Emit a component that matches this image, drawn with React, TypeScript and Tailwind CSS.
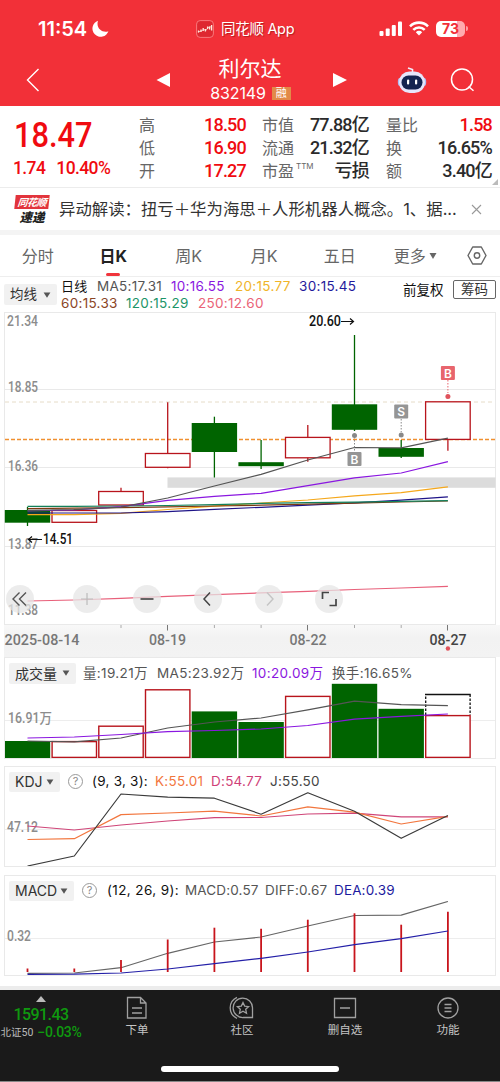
import type { ReactNode } from "react"

// x centre of each trading day
const DAYS = [27.5, 74.3, 121, 167.7, 214.4, 261.1, 307.8, 354.5, 401.2, 447.9]

const GREEN = "#006400"
const RED = "#b8141c"

// body top, body bottom, wick top, wick bottom
const CANDLES = [
  { up: false, top: 510, bottom: 522.7, high: 507, low: 526 },
  { up: true, top: 510.5, bottom: 522.3, high: 509, low: 522.3 },
  { up: true, top: 491.5, bottom: 505, high: 487.7, low: 505 },
  { up: true, top: 453.5, bottom: 467.3, high: 402.3, low: 468.3 },
  { up: false, top: 423, bottom: 452, high: 416.7, low: 477.5 },
  { up: false, top: 462.2, bottom: 466.2, high: 440, low: 469 },
  { up: true, top: 437.4, bottom: 457.8, high: 425, low: 461.8 },
  { up: false, top: 404.3, bottom: 429.8, high: 335, low: 431 },
  { up: false, top: 448, bottom: 456.8, high: 440, low: 458 },
  { up: true, top: 401.8, bottom: 439.4, high: 401.8, low: 450.8 },
]

const PRICE_LINES = [
  { color: "#e8607a", y: [601, 600, 598.4, 596.4, 594.6, 592.9, 591.3, 589.5, 588, 586.3] },
  { color: "#f5a81c", y: [514.6, 514.7, 513.4, 509.5, 506.2, 503, 500, 495.8, 492.7, 486.8] },
  { color: "#1f1488", y: [513, 513, 513, 511.6, 509.3, 507.3, 505.2, 502.8, 500.2, 496.8] },
  { color: "#7c3a12", y: [508.6, 508.2, 507.6, 506.8, 506, 505.2, 504.2, 503.2, 502, 501] },
  { color: "#12805a", y: [506.4, 506.3, 506, 505.5, 504.6, 503.4, 502.7, 502.2, 501.4, 500.6] },
  { color: "#8a17e0", y: [511, 510, 506.6, 500.3, 496.3, 493.3, 485.6, 477.8, 473, 461.7] },
  { color: "#555555", y: [510.4, 509.6, 507.2, 498, 486, 474.4, 460, 447.5, 447.8, 438.2] },
]

const VOLUMES = [741, 741.6, 726.2, 689.8, 711.4, 722, 696.4, 683.8, 708.8, 715.6]

const MACD_TOPS = [968.5, 968.5, 960, 939.5, 927.7, 928.7, 919.7, 913.3, 924.7, 911.7]

function Line({ y, color, width = 1.2 }: { y: number[]; color: string; width?: number }) {
  return (
    <polyline
      points={y.map((v, i) => `${DAYS[i]},${v}`).join(" ")}
      fill="none"
      stroke={color}
      strokeWidth={width}
      strokeLinejoin="round"
    />
  )
}

function Label({ x, y, w, children, fill = "#8c8c8c" }: { x: number; y: number; w: number; children: string; fill?: string }) {
  return (
    <text
      x={x}
      y={y}
      textLength={w}
      lengthAdjust="spacingAndGlyphs"
      fill={fill}
      className="font-['Roboto','Noto_Sans_CJK_SC',sans-serif] text-[14px] font-medium"
    >
      {children}
    </text>
  )
}

// little select box in front of every indicator
function Chip({ children, className }: { children: string; className: string }) {
  return (
    <div className={`flex shrink-0 items-center justify-between rounded-[2px] bg-[#f1f1f1] text-[#333] ${className}`}>
      <span className="whitespace-nowrap">{children}</span>
      <svg width="8" height="6" viewBox="0 0 8 6">
        <path d="M0.6 0.4h6.8L4 5.8z" fill="#555" />
      </svg>
    </div>
  )
}

function Help() {
  return (
    <span className="flex h-[15px] w-[15px] shrink-0 items-center justify-center rounded-full border border-[#999] text-[11px] leading-none tracking-normal text-[#888]">
      ?
    </span>
  )
}

function StatusBar() {
  return (
    <div className="flex h-[50px] items-center pt-[7px] pl-[38px]">
      <span className="w-[54px] text-[20px] font-semibold">11:54</span>
      <svg width="17" height="17" viewBox="0 0 17 17">
        <path d="M6 0.8A8.200 8.200 0 1 0 16.400 11.200C11 13.500 3.500 8.500 6 0.800z" fill="#fff" />
      </svg>
      <div className="ml-[87px] flex items-center gap-[7px]">
        <svg width="18" height="18" viewBox="0 0 18 18">
          <rect x="0.6" y="0.6" width="16.8" height="16.8" rx="3.5" fill="#de2830" stroke="#f8797c" />
          <path d="M2.500 12.500v-2M5 12V9.500M7.200 11V8M9.400 11.500V9M11.600 9V6.500M13.600 9.500V6.500M15.600 10.500V5" fill="none" stroke="#ffe9dd" strokeWidth="1.300" />
          <path d="M2 12l3-1 3-1.500 2 1 2-3 4-1" fill="none" stroke="#ffe9dd" strokeWidth="0.700" />
        </svg>
        <span className="w-[75px] text-[14.500px] whitespace-nowrap tracking-[-0.300px] [text-shadow:1px_1px_1px_rgba(110,0,0,0.45)]">同花顺 App</span>
      </div>
      <svg className="ml-[83px]" width="24" height="17" viewBox="0 0 24 17" fill="#fff">
        <rect x="0.5" y="11" width="4" height="5" rx="1" />
        <rect x="6.700" y="8.500" width="4" height="7.500" rx="1" />
        <rect x="12.800" y="5" width="4" height="11" rx="1" />
        <rect x="19" y="1.500" width="4" height="14.500" rx="1" />
      </svg>
      <svg className="ml-[6px]" width="20" height="15" viewBox="0 0 20 15">
        <g fill="none" stroke="#fff" strokeWidth="2.600">
          <path d="M1 5.300a12.800 12.800 0 0 1 18 0" />
          <path d="M4.300 8.900a8.100 8.100 0 0 1 11.400 0" />
        </g>
        <path d="M10 14.400l-3.200-3.200a4.500 4.500 0 0 1 6.400 0z" fill="#fff" />
      </svg>
      <div className="ml-[7px] flex h-4 w-[29px] items-center justify-center rounded-[5px] bg-[linear-gradient(90deg,#fff_73%,#ffabae_73%)] text-[14px] font-bold text-[#f23038]">
        73
      </div>
      <div className="ml-px h-[5px] w-[2px] rounded-r bg-[#ff9da1]" />
    </div>
  )
}

function TitleBar() {
  return (
    <div className="flex h-14 items-center pt-[3px] pl-[26px]">
      <svg width="14" height="24" viewBox="0 0 14 24">
        <path d="M12.500 1L1.500 12l11 11" fill="none" stroke="#fff" strokeWidth="1.400" />
      </svg>
      <svg className="ml-[116px]" width="15" height="14" viewBox="0 0 15 14">
        <path d="M14 0v14L0.500 7z" fill="#fff" />
      </svg>
      <div className="ml-[13px] flex w-[132px] flex-col items-center pt-[2px]">
        <span className="text-[21px] leading-[26px]">利尔达</span>
        <div className="mt-px flex items-center gap-[6px] pb-[2px] pl-px">
          <span className="text-[16px] leading-5 tracking-[-0.100px]">832149</span>
          <span className="flex h-[13px] w-[19px] items-center justify-center bg-[#e28a48] text-[11px] leading-none">融</span>
        </div>
      </div>
      <svg className="ml-[17px]" width="15" height="14" viewBox="0 0 15 14">
        <path d="M0 0v14L14 7z" fill="#fff" />
      </svg>
      <svg className="ml-[49px]" width="30" height="28" viewBox="0 0 30 28">
        <path d="M15.500 6.500V3.500L11 2" fill="none" stroke="#f2eefc" strokeWidth="1.600" />
        <ellipse cx="2.800" cy="16" rx="2" ry="4" fill="#aebdf5" />
        <ellipse cx="27.200" cy="16" rx="2" ry="4" fill="#aebdf5" />
        <rect x="2" y="5.500" width="26" height="21.500" rx="10.500" fill="#e6e5fb" />
        <rect x="4.500" y="9.500" width="21" height="14" rx="7" fill="#142350" />
        <rect x="10" y="13.500" width="2.200" height="5" rx="1" fill="#fff" />
        <rect x="18" y="13.500" width="2.200" height="5" rx="1" fill="#fff" />
      </svg>
      <svg className="ml-[23px]" width="25" height="24" viewBox="0 0 25 24">
        <circle cx="12" cy="11.500" r="10.500" fill="none" stroke="#fff" strokeWidth="1.500" />
        <path d="M18.500 18.500l5 4.300" stroke="#fff" strokeWidth="1.500" />
      </svg>
    </div>
  )
}

function Stat({ label, value, red }: { label: ReactNode; value: string; red?: boolean }) {
  return (
    <div className="flex h-[23px] items-center justify-between whitespace-nowrap">
      <span className="text-[16px] text-[#666]">{label}</span>
      <span className={`font-['Roboto','Noto_Sans_CJK_SC',sans-serif] text-[18px] font-medium tracking-[-0.800px] ${red ? "text-[#f00b10]" : "text-[#2b2b2b]"}`}>
        {value}
      </span>
    </div>
  )
}

function Quote() {
  return (
    <div className="relative flex h-[82px] border-b border-[#ececec] pt-[7px]">
      <div className="w-[139px] pl-[13px] font-['Roboto',sans-serif] text-[#f00b10]">
        <div className="h-[43px] origin-left scale-x-[0.880] pl-px text-[35px] leading-[46px] font-medium">18.47</div>
        <div className="flex gap-[11px] text-[17.500px] leading-[25px] font-medium tracking-[-0.600px]">
          <span>1.74</span>
          <span>10.40%</span>
        </div>
      </div>
      <div className="w-[107px]">
        <Stat label="高" value="18.50" red />
        <Stat label="低" value="16.90" red />
        <Stat label="开" value="17.27" red />
      </div>
      <div className="ml-4 w-[107px]">
        <Stat label="市值" value="77.88亿" />
        <Stat label="流通" value="21.32亿" />
        <Stat label={<>市盈<sup className="top-[-8px] ml-[2px] text-[8px]">TTM</sup></>} value="亏损" />
      </div>
      <div className="ml-[17px] w-[106px]">
        <Stat label="量比" value="1.58" red />
        <Stat label="换" value="16.65%" />
        <Stat label="额" value="3.40亿" />
      </div>
      <svg className="absolute right-[2px] bottom-[2px]" width="6" height="6">
        <path d="M6 0v6H0z" fill="#bbb" />
      </svg>
    </div>
  )
}

function News() {
  return (
    <div className="flex h-[42px] items-center pl-[14px]">
      <div className="flex w-[36px] flex-col items-center font-bold italic">
        <span className="flex h-[14px] w-[34px] -skew-x-6 items-center justify-center bg-[#e2343c] text-[10px] leading-none tracking-[-0.500px] text-white">同花顺</span>
        <span className="mt-[2px] text-[12.500px] leading-[13px] font-black text-[#222]">速递</span>
      </div>
      <span className="ml-[9px] w-[402px] text-[16.400px] whitespace-nowrap text-[#333]">
        异动解读：扭亏＋华为海思＋人形机器人概念。1、据...
      </span>
      <svg className="ml-[10px]" width="11" height="11" viewBox="0 0 11 11">
        <path d="M1 1l9 9M10 1l-9 9" stroke="#999" strokeWidth="1.100" />
      </svg>
    </div>
  )
}

function Tabs() {
  return (
    <div className="flex h-[42px] border-b border-[#eee] text-[16px] text-[#666]">
      {["分时", "日K", "周K", "月K", "五日"].map((tab) => (
        <div key={tab} className="flex w-[75.500px] flex-col items-center">
          <span className={`h-[37px] leading-[42px] ${tab === "日K" ? "font-bold text-[#222]" : ""}`}>{tab}</span>
          {tab === "日K" && <span className="mt-px h-[3.500px] w-[14px] rounded-sm bg-[#f0343c]" />}
        </div>
      ))}
      <div className="flex w-[75.500px] items-center justify-center gap-[3px]">
        更多
        <svg width="8" height="6" viewBox="0 0 8 6">
          <path d="M0.500 0h7L4 6z" fill="#666" />
        </svg>
      </div>
      <div className="flex flex-1 items-center justify-center">
        <svg width="20" height="19" viewBox="0 0 20 19" fill="none" stroke="#666" strokeWidth="1.400">
          <path d="M5.700 1h8.600L19 9.500 14.300 18H5.700L1 9.500z" strokeLinejoin="round" />
          <circle cx="10" cy="9.500" r="2.700" />
        </svg>
      </div>
    </div>
  )
}

function Averages() {
  return (
    <div className="flex h-[35px] items-start pl-1 text-[13.500px]">
      <Chip className="mt-[7px] h-[21px] w-[53px] px-[6px] text-[13.500px]">均线</Chip>
      <div className="ml-[4px] w-[342px] pt-px leading-[17px] tracking-[0.300px] whitespace-nowrap">
        <div className="flex">
          <span className="w-[36px] text-[13px] text-[#111]">日线</span>
          <span className="w-[74px] text-[#555]">MA5:17.31</span>
          <span className="w-[64px] text-[#8a17e0]">10:16.55</span>
          <span className="w-[64px] text-[#f0b429]">20:15.77</span>
          <span className="text-[#1f1a9c]">30:15.45</span>
        </div>
        <div className="flex">
          <span className="w-[65px] text-[#8a4526]">60:15.33</span>
          <span className="w-[72px] text-[#1c9468]">120:15.29</span>
          <span className="text-[#ea6478]">250:12.60</span>
        </div>
      </div>
      <span className="mt-[3px] w-[50px] text-[13.500px] leading-[20px] text-[#111]">前复权</span>
      <span className="mt-[3px] flex h-[19px] w-[43px] items-center justify-center rounded-[2px] border border-[#666] text-[13.500px] text-[#333]">
        筹码
      </span>
    </div>
  )
}

// trade marks
function Mark({ x, y, letter, fill }: { x: number; y: number; letter: string; fill: string }) {
  return (
    <g>
      <rect x={x - 7} y={y - 7} width="14" height="14" rx="1" fill={fill} />
      <text x={x} y={y + 4.500} textAnchor="middle" fill="#fff" className="font-['Inter',sans-serif] text-[12px] font-semibold">
        {letter}
      </text>
    </g>
  )
}

function PriceChart() {
  return (
    <svg className="block" width="500" height="345" viewBox="0 312 500 345">
      <defs>
        <linearGradient id="axis" x1="0" y1="0" x2="0" y2="1">
          <stop offset="0" stopColor="#f8f8f8" />
          <stop offset="0.4" stopColor="#f2f2f2" />
          <stop offset="1" stopColor="#f3f3f3" />
        </linearGradient>
      </defs>
      <rect x="4" y="625" width="496" height="32" fill="url(#axis)" />
      <g stroke="#e9e9e9" fill="none">
        <rect x="4.500" y="312.500" width="491" height="312" />
        <path d="M5 389.500h490M5 467.500h490M5 546.500h490" />
      </g>
      <rect x="167.500" y="477.400" width="328" height="10.400" fill="#dcdcdc" />
      <path d="M5 402h490" stroke="#e6dcc8" strokeDasharray="4 3" />
      <path d="M5 439.500h490" stroke="#f09030" strokeWidth="1.300" strokeDasharray="4 2" />

      <Label x={7} y={326} w={31}>21.34</Label>
      <Label x={8} y={392} w={30}>18.85</Label>
      <Label x={8} y={471} w={30}>16.36</Label>
      <Label x={8} y={549} w={30}>13.87</Label>
      <Label x={8} y={615} w={30}>11.38</Label>

      {CANDLES.map((c, i) => (
        <g key={i} stroke={c.up ? RED : GREEN} strokeWidth="1.300" fill={c.up ? "#fff" : GREEN}>
          <path d={`M${DAYS[i]} ${c.high}V${c.low}`} />
          {c.up ? (
            <rect x={DAYS[i] - 22.300} y={c.top} width="44.600" height={c.bottom - c.top} />
          ) : (
            <rect x={DAYS[i] - 22.700} y={c.top} width="45.400" height={c.bottom - c.top} stroke="none" />
          )}
        </g>
      ))}
      {PRICE_LINES.map((l) => (
        <Line key={l.color} y={l.y} color={l.color} />
      ))}

      <Label x={309} y={326} w={32} fill="#111">20.60</Label>
      <path d="M341 321.500h12.500M350 318.500l3.500 3-3.500 3" fill="none" stroke="#111" strokeWidth="1.200" />
      <Label x={43} y={544} w={30} fill="#111">14.51</Label>
      <path d="M42 539.500H28.500M32 536.500l-3.500 3 3.500 3" fill="none" stroke="#111" strokeWidth="1.200" />

      <path d="M354.500 437v14M401.200 419v13" stroke="#888" strokeDasharray="1.500 1.500" />
      <circle cx="354.500" cy="435.500" r="2.500" fill="#888" />
      <circle cx="401.200" cy="435" r="2.500" fill="#888" />
      <path d="M447.900 380v13" stroke="#e8656d" strokeDasharray="1.500 1.500" />
      <circle cx="447.900" cy="396.500" r="2.500" fill="#e0525c" />
      <Mark x={354.500} y={459} letter="B" fill="#959595" />
      <Mark x={401.200} y={411.500} letter="S" fill="#959595" />
      <Mark x={447.900} y={373} letter="B" fill="#e8656d" />

      <path d="M121 625v3M214.400 625v3M261.100 625v3M354.500 625v3M401.200 625v3" stroke="#aaa" />
      <path d="M167.500 625v5.500M307.500 625v5.500M447.500 625v5.500" stroke="#777" />
      <Label x={4.500} y={645} w={75} fill="#777">2025-08-14</Label>
      <Label x={149} y={645} w={37} fill="#777">08-19</Label>
      <Label x={289.500} y={645} w={37} fill="#777">08-22</Label>
      <Label x={429.500} y={645} w={37} fill="#444">08-27</Label>
      <circle cx="447.900" cy="648.500" r="2.200" fill="#e0525c" />
    </svg>
  )
}

function ChartButtons() {
  const icons = [
    { d: "M10 -6.500L3.500 0 10 6.500M3.500 -6.500L-3 0l6.500 6.500", color: "#555", width: 1.400, x: -4 },
    { d: "M-6 0h12M0 -6v12", color: "#bbb", width: 1.200, x: 0 },
    { d: "M-6.500 0h13", color: "#555", width: 1.800, x: 0 },
    { d: "M3 -6.500L-3 0l6 6.500", color: "#444", width: 1.500, x: -1 },
    { d: "M-3 -6.500L3 0l-6 6.500", color: "#c4c4c4", width: 1.400, x: 1 },
    { d: "M-6.500 0v-6.500H0M7 0v6.500H0.500", color: "#444", width: 1.700, x: 0 },
  ]
  return (
    <div className="absolute top-[273px] left-[6px] flex gap-[32.700px]">
      {icons.map((icon, i) => (
        <span key={i} className={`h-7 w-7 rounded-full bg-[#e6e6e6]/75 ${i === 0 ? "mr-[6px]" : ""}`}>
          <svg width="28" height="28" viewBox="-14 -14 28 28">
            <path d={icon.d} transform={`translate(${icon.x})`} fill="none" stroke={icon.color} strokeWidth={icon.width} />
          </svg>
        </span>
      ))}
    </div>
  )
}

function Volume() {
  return (
    <section className="ml-1 h-[102px] w-[492px] border border-[#e9e9e9] bg-white">
      <div className="flex h-[25px] items-center pt-[5px] pl-1 text-[13.500px] tracking-[0.350px] whitespace-nowrap text-[#555]">
        <Chip className="h-[21px] w-[67px] px-[6px] text-[14px] tracking-normal">成交量</Chip>
        <span className="ml-[7px] w-[74px]">量:19.21万</span>
        <span className="w-[95px]">MA5:23.92万</span>
        <span className="w-[80px] text-[#8a17e0]">10:20.09万</span>
        <span>换手:16.65%</span>
      </div>
      <svg className="block" width="490" height="75" viewBox="5 683 490 75">
        <path d="M5 720.500h490" stroke="#ededed" />
        <Label x={8} y={723} w={44}>16.91万</Label>
        {VOLUMES.map((top, i) =>
          CANDLES[i].up ? (
            <rect key={i} x={DAYS[i] - 22.200} y={top} width="44.400" height={757.400 - top} fill="#fff" stroke={RED} strokeWidth="1.400" />
          ) : (
            <rect key={i} x={DAYS[i] - 22.700} y={top} width="45.400" height={758 - top} fill={GREEN} />
          )
        )}
        <path d="M425.700 715V694.500M470.100 694.500V715" stroke="#111" strokeWidth="1.300" strokeDasharray="2.500 1.500" />
        <path d="M425 694.500h45.700" stroke="#111" strokeWidth="1.300" />
        <Line color="#555555" y={[741, 741.800, 738, 728, 722, 718, 709.800, 701.200, 704.700, 705.700]} />
        <Line color="#8a17e0" y={[738, 737, 734.500, 731.700, 730.500, 729, 725.500, 719.200, 716.300, 714]} />
      </svg>
    </section>
  )
}

function Kdj() {
  return (
    <section className="mt-[7px] ml-1 h-[101px] w-[492px] border border-[#e9e9e9] bg-white">
      <div className="flex h-[25px] items-center pt-[4px] pl-1 text-[13.500px] tracking-[0.250px] whitespace-nowrap">
        <Chip className="h-5 w-[51px] px-[6px] text-[14px] tracking-normal">KDJ</Chip>
        <span className="ml-2 w-[24px]"><Help /></span>
        <span className="w-[63px] text-[#111]">(9, 3, 3):</span>
        <span className="w-[56px] text-[#f2763e]">K:55.01</span>
        <span className="w-[59px] text-[#cf3f78]">D:54.77</span>
        <span className="text-[#444]">J:55.50</span>
      </div>
      <svg className="block" width="490" height="74" viewBox="5 792 490 74">
        <path d="M5 829.500h490" stroke="#ededed" />
        <Label x={7} y={832} w={31}>47.12</Label>
        <Line color="#cf4578" y={[826, 830, 825, 821, 817.600, 817.500, 814, 813.200, 816.800, 816.800]} />
        <Line color="#f2763e" y={[839.500, 838.700, 814.600, 813, 811.200, 816, 806.800, 812.200, 824, 816.400]} />
        <Line color="#3a3a3a" y={[866, 856, 794, 797.200, 798.200, 814.200, 792.800, 811.200, 838.300, 815.500]} />
      </svg>
    </section>
  )
}

function Macd() {
  return (
    <section className="mt-2 ml-1 h-[101px] w-[492px] border border-[#e9e9e9] bg-white">
      <div className="flex h-[25px] items-center pt-[4px] pl-1 text-[13.500px] tracking-[0.150px] whitespace-nowrap text-[#555]">
        <Chip className="h-5 w-[65px] px-[6px] text-[14px] tracking-normal">MACD</Chip>
        <span className="ml-2 w-[25px]"><Help /></span>
        <span className="w-[78px] tracking-[0.400px] text-[#111]">(12, 26, 9):</span>
        <span className="w-[80px]">MACD:0.57</span>
        <span className="w-[69px]">DIFF:0.67</span>
        <span className="text-[#1c1a9e]">DEA:0.39</span>
      </div>
      <svg className="block" width="490" height="74" viewBox="5 901 490 74">
        <path d="M5 938.500h490" stroke="#ededed" />
        <Label x={7} y={941} w={24}>0.32</Label>
        <Line color="#666666" y={[973.300, 973, 967.700, 953.300, 942, 937, 926, 915.500, 915.200, 901.500]} />
        {MACD_TOPS.map((top, i) => (
          <path key={i} d={`M${DAYS[i]} ${top}V972`} stroke="#c8141c" strokeWidth="1.800" />
        ))}
        <Line color="#2420a8" y={[974.300, 974.200, 973, 969, 963.700, 958.300, 952, 944.700, 938.600, 931]} />
      </svg>
    </section>
  )
}

function NavItem({ label, children, className }: { label: string; children: ReactNode; className: string }) {
  return (
    <div className={`flex flex-col items-center pt-[6px] ${className}`}>
      <svg width="26" height="24" viewBox="0 0 26 24" fill="none" stroke="#a0a0a0" strokeWidth="1.300">
        {children}
      </svg>
      <span className="text-[11.500px] leading-[21px] text-[#c4c4c4]">{label}</span>
    </div>
  )
}

function BottomNav() {
  return (
    <nav className="flex h-[92px] flex-col items-center bg-[#1a1a1a]">
      <div className="flex h-[76px] w-full">
        <div className="flex w-[82px] flex-col items-center pt-[6px] font-['Roboto','Noto_Sans_CJK_SC',sans-serif]">
          <svg width="10" height="6" viewBox="0 0 10 6">
            <path d="M0 6h10L5 0z" fill="#bbb" />
          </svg>
          <span className="mt-[3px] text-[16px] leading-[19px] font-medium tracking-[-0.600px] text-[#0f990f]">1591.43</span>
          <div className="flex items-center gap-1 leading-[17px] whitespace-nowrap">
            <span className="text-[10.500px] text-[#bbb]">北证50</span>
            <span className="text-[14px] font-medium tracking-[-0.300px] text-[#0f990f]">−0.03%</span>
          </div>
        </div>
        <NavItem label="下单" className="w-[110px]">
          <path d="M3.500 1.500h13l5.500 5.500v15H3.500zM16.500 1.500V7H22M8 12h10M8 17h10" />
        </NavItem>
        <NavItem label="社区" className="w-[100px]">
          <path d="M8 1.300A11.500 11.500 0 0 0 8 22.300" />
          <path d="M23.500 21.500H14.500A9.700 9.700 0 1 1 23.500 12z" />
          <path d="M14 6.500l1.700 3.600 3.900 0.500-2.900 2.700 0.800 3.900-3.500-1.900-3.500 1.900 0.800-3.900-2.900-2.700 3.900-0.500z" />
        </NavItem>
        <NavItem label="删自选" className="w-[106px]">
          <path d="M2.500 2.500h21v19h-21zM8 12h10" />
        </NavItem>
        <NavItem label="功能" className="w-[100px]">
          <circle cx="13" cy="12" r="10" />
          <path d="M9.500 8.500h7M9.500 12h7M9.500 15.500h7" />
        </NavItem>
      </div>
      <div className="h-[6px] w-[178px] rounded-full bg-white" />
      <div className="mt-[9px] h-px w-full bg-[#888]" />
    </nav>
  )
}

export default function App() {
  return (
    <div className="h-[1082px] w-[500px] overflow-hidden bg-white font-['Inter','Noto_Sans_CJK_SC',sans-serif]">
      <header className="h-[106px] bg-[#f23038] text-white">
        <StatusBar />
        <TitleBar />
      </header>
      <Quote />
      <News />
      <div className="h-[5px] bg-[#f4f4f4]" />
      <Tabs />
      <Averages />
      {/* candles + floating zoom buttons */}
      <div className="relative">
        <PriceChart />
        <ChartButtons />
      </div>
      <Volume />
      <Kdj />
      <Macd />
      <div className="mt-[10px] h-[4px] bg-[#ececec]" />
      <BottomNav />
    </div>
  )
}
